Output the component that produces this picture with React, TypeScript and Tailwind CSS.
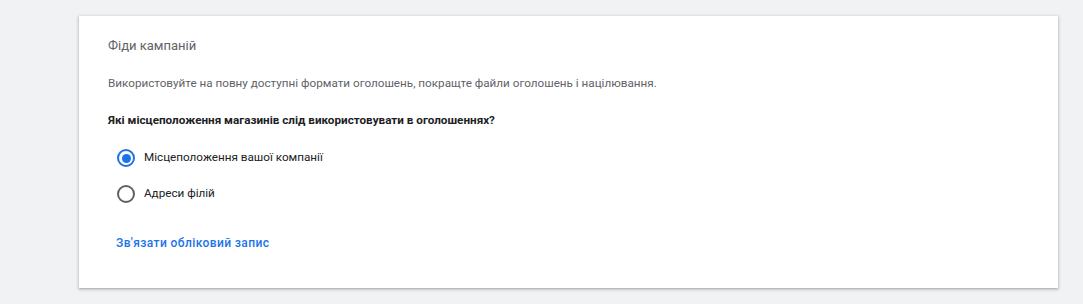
import React from "react";

function Radio({ checked, label }: { checked: boolean; label: string }) {
  return (
    <label className="flex items-center h-[36px] cursor-pointer">
      <span className="w-[36px] h-[36px] flex items-center justify-center">
        <span
          className={
            checked
              ? "w-[18px] h-[18px] rounded-full border-2 border-[#1a73e8] flex items-center justify-center"
              : "w-[18px] h-[18px] rounded-full border-2 border-[#5f6368]"
          }
        >
          {checked && <span className="w-[9px] h-[9px] rounded-full bg-[#1a73e8]" />}
        </span>
      </span>
      <span className="text-[11.7px] text-[#202124]">{label}</span>
    </label>
  );
}

export default function App() {
  return (
    <div
      className="w-[1083px] h-[304px] bg-[#f1f2f4] pt-[16px] pl-[79px]"
      style={{ fontFamily: "Roboto, 'Noto Sans', sans-serif" }}
    >
      <div className="w-[979px] h-[272px] bg-white shadow-[0_1px_2px_rgba(60,64,67,0.3),0_1px_3px_1px_rgba(60,64,67,0.15)] pl-[29px] pt-[20px]">
        <div className="text-[13px] leading-[20px] text-[#5f6368]">Фіди кампаній</div>
        <div className="mt-[19px] text-[11.7px] leading-[16px] text-[#5f6368]">
          Використовуйте на повну доступні формати оголошень, покращте файли оголошень і націлювання.
        </div>
        <div className="mt-[21px] text-[11.7px] leading-[16px] font-bold text-[#202124]">
          Які місцеположення магазинів слід використовувати в оголошеннях?
        </div>
        <div className="mt-[12px] flex flex-col">
          <Radio checked label="Місцеположення вашої компанії" />
          <Radio checked={false} label="Адреси філій" />
        </div>
        <div className="mt-[18px] ml-[8px]">
          <a className="text-[12px] leading-[16px] font-medium text-[#1a73e8] tracking-[0.4px]">
            Зв'язати обліковий запис
          </a>
        </div>
      </div>
    </div>
  );
}
